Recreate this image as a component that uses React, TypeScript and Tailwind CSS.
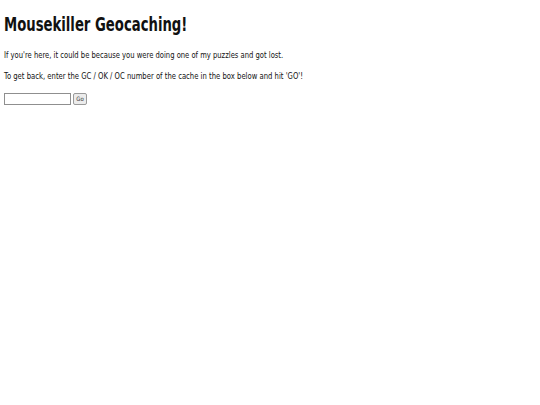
export default function App() {
  return (
    <div className="bg-white min-h-[405px] px-[4px] text-[#111]" style={{ fontFamily: '"DejaVu Sans Condensed", "DejaVu Sans", sans-serif' }}>
      <h1 className="pt-[13px] text-[20px] font-bold leading-[22px] whitespace-nowrap origin-left scale-x-[0.735]">Mousekiller Geocaching!</h1>
      <p className="mt-[14px] text-[9px] leading-[12px] whitespace-nowrap origin-left scale-x-[0.84]">If you're here, it could be because you were doing one of my puzzles and got lost.</p>
      <p className="mt-[9px] text-[9px] leading-[12px] whitespace-nowrap origin-left scale-x-[0.847]">To get back, enter the GC / OK / OC number of the cache in the box below and hit 'GO'!</p>
      <div className="mt-[11px] flex items-center gap-[2px]">
        <input type="text" className="w-[67px] h-[12px] border border-[#8f8f8f] bg-white" />
        <button className="h-[12px] w-[14px] flex items-center justify-center border border-[#9a9a9a] rounded-[2px] bg-[#ececec] text-[6px] leading-none text-[#333]">Go</button>
      </div>
    </div>
  );
}
